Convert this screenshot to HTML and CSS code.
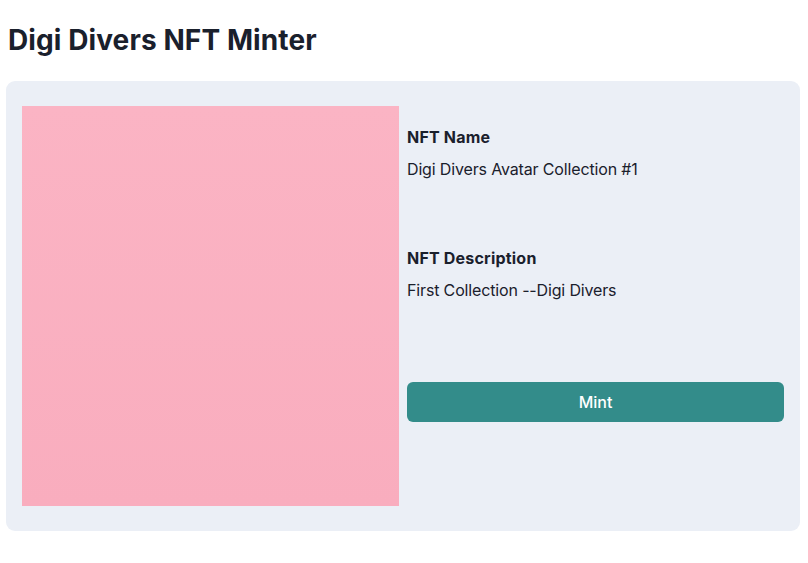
FILE: index.html
```html
<!DOCTYPE html>
<html>
<head>
<meta charset="utf-8">
<link rel="stylesheet" href="styles.css">
</head>
<body>
<h1 class="title">Digi Divers NFT Minter</h1>
<div class="card">
  <div class="art"></div>
  <div class="info">
    <div class="label">NFT Name</div>
    <div class="value">Digi Divers Avatar Collection #1</div>
    <div class="label label-gap">NFT Description</div>
    <div class="value">First Collection --Digi Divers</div>
    <button class="mint">Mint</button>
  </div>
</div>
</body>
</html>
```
FILE: styles.css
```css
* { box-sizing: border-box; }
html, body { margin: 0; background: #ffffff; }
body {
  font-family: Inter, "Noto Sans", sans-serif;
  color: #1a202c;
  padding: 0 8px 0 6px;
}
.title {
  margin: 0;
  padding: 22px 0 0 2px;
  font-size: 28px;
  line-height: 36px;
  font-weight: 700;
  letter-spacing: 0.1px;
}
.card {
  margin-top: 23px;
  background: #ebeff6;
  border-radius: 9px;
  padding: 25px 16px;
  display: flex;
  gap: 8px;
}
.art {
  width: 377px;
  height: 400px;
  flex: none;
  background: linear-gradient(180deg, #fbb4c4 0%, #f9adbe 100%);
}
.info {
  flex: 1;
  display: flex;
  flex-direction: column;
  padding-top: 19px;
}
.label {
  font-size: 16px;
  line-height: 24px;
  font-weight: 700;
  letter-spacing: 0.2px;
}
.value {
  margin-top: 8px;
  font-size: 16px;
  line-height: 24px;
  font-weight: 400;
  letter-spacing: -0.15px;
}
.label-gap { margin-top: 65px; }
.mint {
  margin-top: 80px;
  height: 40px;
  border: none;
  border-radius: 6px;
  background: #338c8a;
  color: #ffffff;
  font-family: Inter, "Noto Sans", sans-serif;
  font-size: 16px;
  font-weight: 500;
  cursor: pointer;
}
```
